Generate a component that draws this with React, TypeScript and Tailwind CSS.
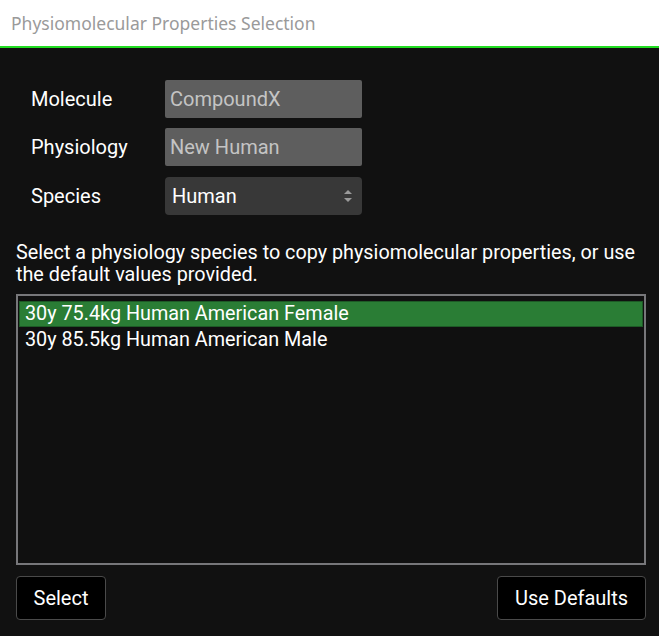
import React, { useState } from "react";

const items = ["30y 75.4kg Human American Female", "30y 85.5kg Human American Male"];

function Field({ label, children }: { label: string; children: React.ReactNode }) {
  return (
    <div className="flex items-center">
      <span className="w-[134px] text-[20px] text-white">{label}</span>
      {children}
    </div>
  );
}

export default function App() {
  const [selected, setSelected] = useState(0);

  return (
    <div className="w-[659px] h-[636px] flex flex-col bg-[#111111] font-['Roboto',sans-serif]">
      <div className="h-[46px] bg-white flex items-center pl-[11px] shrink-0">
        <span className="text-[17.5px] text-[#9a9a9a] font-['Noto_Sans',sans-serif]">
          Physiomolecular Properties Selection
        </span>
      </div>
      <div className="h-[2px] bg-[#22dd22] shrink-0" />

      <div className="flex flex-col flex-1 pl-[16px] pr-[13px] pt-[32px]">
        <div className="flex flex-col gap-[10px] pl-[15px]">
          <Field label="Molecule">
            <div className="w-[197px] h-[38px] bg-[#5e5e5e] rounded-[2px] flex items-center px-[5px] text-[20px] text-[#c4c4c4]">
              CompoundX
            </div>
          </Field>
          <Field label="Physiology">
            <div className="w-[197px] h-[38px] bg-[#5e5e5e] rounded-[2px] flex items-center px-[5px] text-[20px] text-[#c4c4c4]">
              New Human
            </div>
          </Field>
          <Field label="Species">
            <div className="mt-[1px] w-[197px] h-[38px] bg-[#383838] rounded-[4px] flex items-center justify-between pl-[7px] pr-[10px] text-[20px] text-white">
              <span>Human</span>
              <svg width="8" height="12" viewBox="0 0 8 12" fill="#9a9a9a">
                <path d="M4 0 L8 4 L0 4 Z" />
                <path d="M0 8 L8 8 L4 12 Z" />
              </svg>
            </div>
          </Field>
        </div>

        <p className="mt-[27px] text-[19.8px] leading-[22px] text-white">
          Select a physiology species to copy physiomolecular properties, or use the default values provided.
        </p>

        <div className="mt-[8px] h-[271px] border-2 border-[#77777a] bg-[#101010] px-[1px] pt-[5px]">
          {items.map((item, i) => (
            <div
              key={item}
              onClick={() => setSelected(i)}
              className={
                i === selected
                  ? "h-[26px] flex items-center pl-[5px] bg-[#2a7d35] border border-[#1d5a26] text-[19.8px] text-white"
                  : "h-[26px] flex items-center pl-[5px] border border-transparent text-[19.8px] text-white"
              }
            >
              {item}
            </div>
          ))}
        </div>

        <div className="mt-[11px] flex justify-between">
          <button className="w-[90px] h-[44px] bg-black border border-[#4a4a4a] rounded-[4px] text-[20px] text-white">
            Select
          </button>
          <button className="w-[149px] h-[44px] bg-black border border-[#4a4a4a] rounded-[4px] text-[20px] text-white">
            Use Defaults
          </button>
        </div>
      </div>
    </div>
  );
}
